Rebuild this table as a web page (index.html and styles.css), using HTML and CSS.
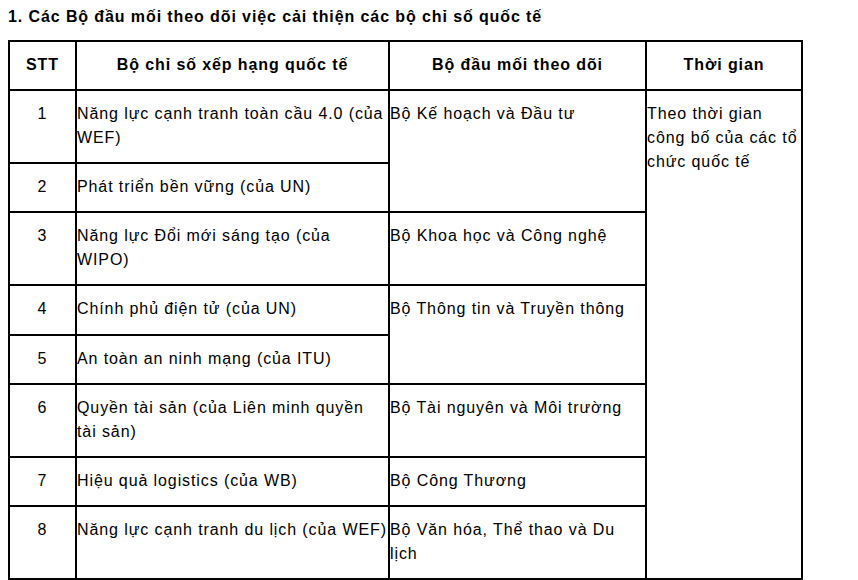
FILE: index.html
```html
<!DOCTYPE html>
<html lang="vi">
<head>
<meta charset="utf-8">
<title>Các Bộ đầu mối</title>
<link rel="stylesheet" href="styles.css">
</head>
<body>
<p class="title">1. Các Bộ đầu mối theo dõi việc cải thiện các bộ chỉ số quốc tế</p>
<table class="grid">
  <thead>
    <tr>
      <th class="c-stt">STT</th>
      <th class="c-name">Bộ chỉ số xếp hạng quốc tế</th>
      <th class="c-org">Bộ đầu mối theo dõi</th>
      <th class="c-time">Thời gian</th>
    </tr>
  </thead>
  <tbody>
    <tr>
      <td class="num">1</td>
      <td>Năng lực cạnh tranh toàn cầu 4.0 (của WEF)</td>
      <td rowspan="2">Bộ Kế hoạch và Đầu tư</td>
      <td rowspan="8">Theo thời gian công bố của các tổ chức quốc tế</td>
    </tr>
    <tr>
      <td class="num">2</td>
      <td>Phát triển bền vững (của UN)</td>
    </tr>
    <tr>
      <td class="num">3</td>
      <td>Năng lực Đổi mới sáng tạo (của<br>WIPO)</td>
      <td>Bộ Khoa học và Công nghệ</td>
    </tr>
    <tr class="tall">
      <td class="num">4</td>
      <td>Chính phủ điện tử (của UN)</td>
      <td rowspan="2">Bộ Thông tin và Truyền thông</td>
    </tr>
    <tr>
      <td class="num">5</td>
      <td>An toàn an ninh mạng (của ITU)</td>
    </tr>
    <tr>
      <td class="num">6</td>
      <td>Quyền tài sản (của Liên minh quyền<br>tài sản)</td>
      <td>Bộ Tài nguyên và Môi trường</td>
    </tr>
    <tr>
      <td class="num">7</td>
      <td>Hiệu quả logistics (của WB)</td>
      <td>Bộ Công Thương</td>
    </tr>
    <tr>
      <td class="num">8</td>
      <td class="oneline">Năng lực cạnh tranh du lịch (của WEF)</td>
      <td>Bộ Văn hóa, Thể thao và Du<br>lịch</td>
    </tr>
  </tbody>
</table>
</body>
</html>
```

FILE: styles.css
```css
html {
  overflow: hidden;
}
body {
  margin: 8px 8px 0 8px;
  font-family: "Liberation Sans", Arial, sans-serif;
  font-size: 16px;
  letter-spacing: 0.9px;
  color: #000;
  background: #fff;
}
.title {
  margin: 0 0 14px 0;
  font-weight: bold;
  line-height: 18px;
}
.grid {
  box-sizing: border-box;
  width: 795px;
  table-layout: fixed;
  border-collapse: separate;
  border-spacing: 0;
  border-top: 2px solid #000;
  border-left: 2px solid #000;
}
.grid th,
.grid td {
  border-right: 2px solid #000;
  border-bottom: 2px solid #000;
  padding: 11px 0 12px 0;
  line-height: 24px;
  text-align: left;
  vertical-align: top;
}
.grid th {
  font-weight: bold;
  text-align: center;
  vertical-align: middle;
}
.c-stt { width: 65px; }
.c-name { width: 311px; }
.c-org { width: 255px; }
.c-time { width: 154px; }
.grid td.num {
  text-align: center;
}
.grid tr.tall td.num,
.grid tr.tall td.num + td {
  padding-bottom: 13px;
}
.grid td.oneline {
  white-space: nowrap;
  overflow: hidden;
}
```
